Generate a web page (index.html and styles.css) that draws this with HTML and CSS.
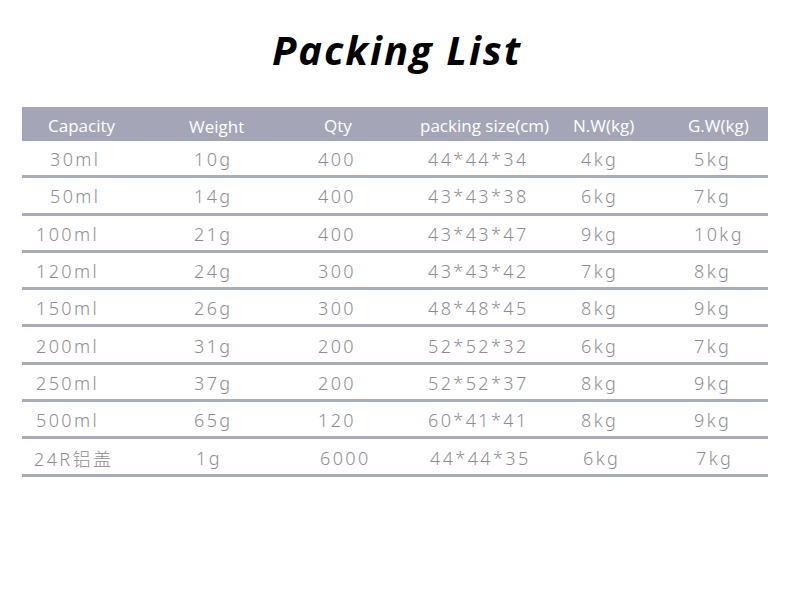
FILE: index.html
```html
<!DOCTYPE html>
<html lang="en">
<head>
<meta charset="utf-8">
<title>Packing List</title>
<link rel="stylesheet" href="styles.css">
</head>
<body>
<main class="page">
  <h1 class="title">Packing List</h1>
  <div class="table">
    <div class="row head">
      <div class="cell">Capacity</div>
      <div class="cell">Weight</div>
      <div class="cell">Qty</div>
      <div class="cell">packing size(cm)</div>
      <div class="cell">N.W(kg)</div>
      <div class="cell">G.W(kg)</div>
    </div>
    <div class="row">
      <div class="cell indent">30ml</div>
      <div class="cell">10g</div>
      <div class="cell">400</div>
      <div class="cell">44*44*34</div>
      <div class="cell">4kg</div>
      <div class="cell">5kg</div>
    </div>
    <div class="row">
      <div class="cell indent">50ml</div>
      <div class="cell">14g</div>
      <div class="cell">400</div>
      <div class="cell">43*43*38</div>
      <div class="cell">6kg</div>
      <div class="cell">7kg</div>
    </div>
    <div class="row">
      <div class="cell">100ml</div>
      <div class="cell">21g</div>
      <div class="cell">400</div>
      <div class="cell">43*43*47</div>
      <div class="cell">9kg</div>
      <div class="cell">10kg</div>
    </div>
    <div class="row">
      <div class="cell">120ml</div>
      <div class="cell">24g</div>
      <div class="cell">300</div>
      <div class="cell">43*43*42</div>
      <div class="cell">7kg</div>
      <div class="cell">8kg</div>
    </div>
    <div class="row">
      <div class="cell">150ml</div>
      <div class="cell">26g</div>
      <div class="cell">300</div>
      <div class="cell">48*48*45</div>
      <div class="cell">8kg</div>
      <div class="cell">9kg</div>
    </div>
    <div class="row">
      <div class="cell">200ml</div>
      <div class="cell">31g</div>
      <div class="cell">200</div>
      <div class="cell">52*52*32</div>
      <div class="cell">6kg</div>
      <div class="cell">7kg</div>
    </div>
    <div class="row">
      <div class="cell">250ml</div>
      <div class="cell">37g</div>
      <div class="cell">200</div>
      <div class="cell">52*52*37</div>
      <div class="cell">8kg</div>
      <div class="cell">9kg</div>
    </div>
    <div class="row">
      <div class="cell">500ml</div>
      <div class="cell">65g</div>
      <div class="cell">120</div>
      <div class="cell">60*41*41</div>
      <div class="cell">8kg</div>
      <div class="cell">9kg</div>
    </div>
    <div class="row last">
      <div class="cell">24R铝盖</div>
      <div class="cell">1g</div>
      <div class="cell">6000</div>
      <div class="cell">44*44*35</div>
      <div class="cell">6kg</div>
      <div class="cell">7kg</div>
    </div>
  </div>
</main>
</body>
</html>
```
FILE: styles.css
```css
html, body {
  margin: 0;
  padding: 0;
  background: #ffffff;
}

.page {
  width: 790px;
  height: 612px;
  padding-top: 24.5px;
  box-sizing: border-box;
}

.title {
  margin: 0;
  height: 82.5px;
  text-align: center;
  font-family: "Open Sans", "Noto Sans", sans-serif;
  font-weight: 700;
  font-style: italic;
  font-size: 40px;
  line-height: 50px;
  color: #000000;
  letter-spacing: 2px;
  padding-left: 4px;
}

.table {
  margin-left: 22px;
  width: 746px;
}

.row {
  display: grid;
  grid-template-columns: 158px 120px 110px 150px 110px 98px;
  height: 34.3px;
  border-bottom: 3px solid #abacbb;
  font-family: "Noto Sans", "Noto Sans CJK SC", sans-serif;
  font-weight: 300;
  font-size: 18px;
  letter-spacing: 2.4px;
  color: #8e8e92;
  align-items: center;
}

.row .cell {
  white-space: nowrap;
  padding-top: 2px;
}

.row .cell:nth-child(1) { padding-left: 14px; }
.row .cell:nth-child(2) { padding-left: 14px; }
.row .cell:nth-child(3) { padding-left: 18px; }
.row .cell:nth-child(4) { padding-left: 18px; }
.row .cell:nth-child(5) { padding-left: 21px; }
.row .cell:nth-child(6) { padding-left: 24px; }

.row .cell.indent { padding-left: 28px; }

.row.last .cell:nth-child(1) { padding-left: 12px; }
.row.last .cell:nth-child(n+2) { margin-left: 2px; }

.row.head {
  height: 34px;
  border-bottom: none;
  background: #a4a6b8;
  color: #ffffff;
  font-family: "Open Sans", "Noto Sans", sans-serif;
  font-weight: 400;
  font-size: 17px;
  letter-spacing: 0;
}

.row.head .cell { padding-top: 3px; }
.row.head .cell:nth-child(1) { padding-left: 26px; }
.row.head .cell:nth-child(2) { padding-left: 9px; padding-top: 5px; }
.row.head .cell:nth-child(3) { padding-left: 24px; }
.row.head .cell:nth-child(4) { padding-left: 10px; }
.row.head .cell:nth-child(5) { padding-left: 13px; }
.row.head .cell:nth-child(6) { padding-left: 18px; }
```
